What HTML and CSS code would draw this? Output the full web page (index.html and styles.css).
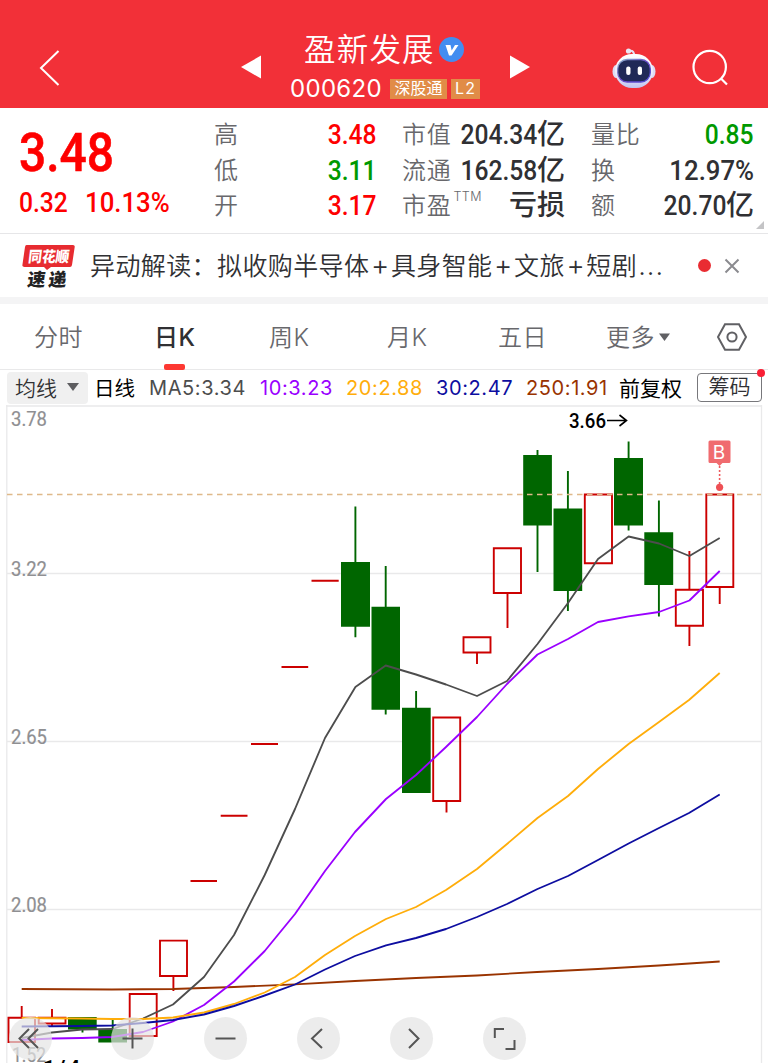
FILE: index.html
```html
<!DOCTYPE html>
<html lang="zh-CN">
<head>
<meta charset="utf-8">
<title>盈新发展 000620</title>
<link rel="stylesheet" href="styles.css">
</head>
<body>
<header class="top">
  <svg class="back" width="24" height="40" viewBox="0 0 24 40"><path d="M21.500 4 4 21 21.500 38"/></svg>
  <svg class="prev" width="20" height="24" viewBox="0 0 20 24"><path d="M0 12 20 .5V23.500z"/></svg>
  <div class="title">
    <div class="name"><span class="name-text">盈新发展</span><svg width="25" height="25" viewBox="0 0 25 25"><circle cx="12.500" cy="12.500" r="12.500" fill="#438df0"/><path d="M6.500 8h5l1.200 5.500L16 8h3.500L12.500 18.500H10z" fill="#fff"/></svg></div>
    <div class="code"><span class="code-text">000620</span><span class="tag tag-sgt">深股通</span><span class="tag tag-l2">L2</span></div>
  </div>
  <svg class="next" width="20" height="24" viewBox="0 0 20 24"><path d="M20 12 0 .5V23.500z"/></svg>
  <svg class="robot" width="44" height="41" viewBox="0 0 44 41">
    <defs>
      <linearGradient id="shell" x1="0" y1="0" x2="0" y2="1"><stop offset="0" stop-color="#fff"/><stop offset=".6" stop-color="#ece9fb"/><stop offset="1" stop-color="#bfc4ee"/></linearGradient>
      <linearGradient id="rim" x1="0" y1="0" x2="1" y2="1"><stop offset="0" stop-color="#8eb4cb"/><stop offset=".5" stop-color="#6b4bc8"/><stop offset="1" stop-color="#514bd4"/></linearGradient>
    </defs>
    <path d="M17 3q6-1 5 6" fill="none" stroke="#e6e0f2" stroke-width="2"/><circle cx="16.500" cy="3" r="2.600" fill="#e9e7f5"/>
    <ellipse cx="4" cy="23.500" rx="3.500" ry="6.500" fill="#dcdcf4"/><ellipse cx="40" cy="23.500" rx="3.500" ry="6.500" fill="#dcdcf4"/>
    <rect x="3" y="6" width="38" height="34" rx="17" fill="url(#shell)"/>
    <rect x="5.700" y="11.500" width="32.600" height="22.500" rx="9.500" fill="#202957" stroke="url(#rim)" stroke-width="1.300"/>
    <rect x="14.200" y="18.500" width="4.300" height="8.500" rx="2" fill="#fff"/><rect x="25.700" y="18.500" width="4.300" height="8.500" rx="2" fill="#fff"/>
  </svg>
  <svg class="search" width="36" height="38" viewBox="0 0 36 38"><circle cx="17.700" cy="18" r="16.200"/><path d="M29 29.500 35 35.500"/></svg>
</header>

<section class="quote">
  <div class="price">
    <div class="last"><span class="num">3.48</span></div>
    <div class="chg"><span class="num">0.32</span><span class="num pct">10.13%</span></div>
  </div>
  <dl class="stats s1">
    <dt>高</dt><dd class="up"><span class="num">3.48</span></dd>
    <dt>低</dt><dd class="down"><span class="num">3.11</span></dd>
    <dt>开</dt><dd class="up"><span class="num">3.17</span></dd>
  </dl>
  <dl class="stats s2">
    <dt>市值</dt><dd><span class="num">204.34</span>亿</dd>
    <dt>流通</dt><dd><span class="num">162.58</span>亿</dd>
    <dt>市盈<sup>TTM</sup></dt><dd>亏损</dd>
  </dl>
  <dl class="stats s3">
    <dt>量比</dt><dd class="down"><span class="num">0.85</span></dd>
    <dt>换</dt><dd><span class="num pct">12.97%</span></dd>
    <dt>额</dt><dd><span class="num">20.70</span>亿</dd>
  </dl>
  <i class="corner"></i>
</section>

<section class="news">
  <svg class="logo" width="54" height="46" viewBox="0 0 54 46">
    <path d="M4.500 0H51q2 0 1.700 2L50 20q-.4 2-2 2H29l-4 3-3-3H2.500Q0 22 .4 20L3 2q.3-2 1.500-2z" fill="#e72b30"/>
    <text x="5" y="17" textLength="41" lengthAdjust="spacingAndGlyphs" class="logo-a">同花顺</text>
    <text x="7" y="41" textLength="39" class="logo-b">速递</text>
  </svg>
  <p class="headline">异动解读：拟收购半导体<b>+</b>具身智能<b>+</b>文旅<b>+</b>短剧<b class="etc">...</b></p>
  <i class="dot"></i>
  <svg class="close" width="16" height="16" viewBox="0 0 16 16"><path d="M1.500 1.500 14.500 14.500M14.500 1.500 1.500 14.500"/></svg>
</section>

<nav class="tabs">
  <span class="tab">分时</span>
  <span class="tab active">日K</span>
  <span class="tab">周K</span>
  <span class="tab">月K</span>
  <span class="tab">五日</span>
  <span class="tab more">更多<svg width="11" height="9" viewBox="0 0 11 9"><path d="M0 .5h11L5.500 8z"/></svg></span>
  <svg class="gear" width="30" height="28" viewBox="0 0 30 28"><path d="M8 1.300h14L29 14l-7 12.700H8L1 14z"/><circle cx="15" cy="14" r="4.600"/></svg>
</nav>

<div class="ma">
  <span class="pick">均线<svg width="12" height="8" viewBox="0 0 12 8"><path d="M0 0h12L6 8z"/></svg></span>
  <span class="period">日线</span>
  <span class="v v5">MA5:3.34</span>
  <span class="v v10">10:3.23</span>
  <span class="v v20">20:2.88</span>
  <span class="v v30">30:2.47</span>
  <span class="v v250">250:1.91</span>
  <span class="adjust">前复权</span>
  <span class="chips">筹码<i></i></span>
</div>

<main class="chart">
  <svg class="plot" width="768" height="658" viewBox="0 405 768 658">
    <g class="grid"><path d="M6 406H762M7 573.500H761M7 741.500H761M7 909.500H761"/><path d="M6.800 405V1063M761.500 405V1063"/></g>
    <g class="axis">
      <text x="11" y="426" textLength="36" lengthAdjust="spacingAndGlyphs">3.78</text>
      <text x="11" y="576" textLength="36" lengthAdjust="spacingAndGlyphs">3.22</text>
      <text x="11" y="744" textLength="36" lengthAdjust="spacingAndGlyphs">2.65</text>
      <text x="11" y="912" textLength="36" lengthAdjust="spacingAndGlyphs">2.08</text>
      <text x="12" y="1062" textLength="34" lengthAdjust="spacingAndGlyphs">1.52</text>
    </g>
    <text class="date" x="43" y="1075" textLength="37">1/4</text>
    <g class="rise">
      <path d="M21.700 1006V1017M52 1009V1017M52 1024V1026M173.400 976V991M446.500 802V812.500M477 653V664M507.500 593V628M689.400 551V589M689.400 626V646M719.700 587V604"/>
      <path d="M190.500 881H217M220.700 815.800H247.500M251 744H278M281.500 667H308.200M311.500 580.700H338.700"/>
      <path d="M8.500 1017.800H35V1042H8.500zM38.700 1017.800H65.500V1023.500H38.700zM129.700 994H156.700V1036H129.700zM160 940.600H187V976H160zM433.200 717.500H460.200V801H433.200zM463.500 637.200H490.500V652.500H463.500zM493.800 548.200H521V593H493.800zM584.800 494.500H612V563.300H584.800zM675.800 589.700H703V625.700H675.800zM706.300 494.500H733.300V587H706.300z"/>
    </g>
    <g class="fall">
      <path class="wick" d="M82.500 1018V1032.500M112.700 1018V1040M355.400 506.500V637.200M385.700 566V714.500M416.100 691V793M537.500 450V572M567.900 471V611M628.600 441.500V530.500M658.900 500.500V616.500"/>
      <path d="M68 1017h28.700v12.500H68zM98.300 1029H127v13.500H98.300zM341 562h29v64.800h-29zM371.500 606.700H400V709.700H371.500zM402 707.700h28.700V793H402zM523.200 455h28.700v70.500H523.200zM553.500 508.500H582.200V591H553.500zM614 458h29v67.500H614zM644.300 532.300H673.200V585H644.300z"/>
    </g>
    <path class="current" d="M7 494.500H761"/>
    <g class="lines">
      <polyline stroke="#993300" points="21.700,989 112,989.500 173,989 234,987 295,984.300 355,981 416,978 477,975.500 537,972 598,969 659,965.500 719.700,961.500"/>
      <polyline stroke="#4d4d4d" points="21.700,1038 52,1032.500 82,1029.500 112.700,1029 143,1018.500 173,1004.500 204,977 234,935 264.700,875 295,809 325,738 355.400,687 385.700,665.500 416,674.500 446,684.500 477,696 507,681 537.500,644 568,603 598,559 628.600,536.500 659,543.500 689.400,556 719.700,538"/>
      <polyline stroke="#9a00ff" points="21.700,1040 52,1038.500 82,1038 112,1037 143,1032 173,1021.500 204,1005 234,981.500 264.700,951 295,914 325,871 355,832 386,799 416,775 446,747 477,717 507,684 537.500,654.500 568,639 598,622 628.600,616.300 659,612 689.400,600.500 719.700,571"/>
      <polyline stroke="#ffad0a" points="21.700,1018 82,1018.500 112,1019 143,1019 173,1017.500 204,1012.500 234,1004 264.700,992.500 295,977 325,955 355,936 386,919 416,907 446,890 477,869 507,844 537.500,818 568,796 598,769 628.600,744 659,722 689,700 719.700,673"/>
      <polyline stroke="#0d0da0" points="21.700,1026.500 82,1026 112,1025.500 143,1023 173,1020 204,1014.500 234,1006 264.700,995.500 295,984.500 325,969.500 355,956 386,945.300 416,938 446,929 477,917 507,904 537.500,889 568,876 598,860 628.600,843.500 659,828 689,813 719.700,794.500"/>
    </g>
    <g class="peak"><text x="569" y="428" textLength="37" lengthAdjust="spacingAndGlyphs">3.66</text><path d="M607 420.500H626M619.500 415 626.500 420.500 619.500 426"/></g>
    <g class="buy"><path d="M711 440.500h18q1.500 0 1.500 1.500v19.500q0 1.500-1.500 1.500h-6.500l-3 3-3-3H710q-1.500 0-1.500-1.500V442q0-1.500 1.500-1.500z"/><text x="712.800" y="459">B</text><path class="stem" d="M719.600 466V484"/><circle cx="719.600" cy="487.300" r="3.600"/></g>
  </svg>
  <div class="controls">
    <span><svg width="42" height="42"><path d="M20 12 10.500 21.500 20 31M29 12 19.500 21.500 29 31"/></svg></span>
    <span><svg width="42" height="42"><path d="M11.500 21.500h20M21.500 11.500v20"/></svg></span>
    <span><svg width="42" height="42"><path d="M11.500 21.500h20"/></svg></span>
    <span><svg width="42" height="42"><path d="M25 12 15 21.500 25 31"/></svg></span>
    <span><svg width="42" height="42"><path d="M19 12 28.500 21.500 19 31"/></svg></span>
    <span><svg width="42" height="42"><path d="M11.800 21V12H21M31.500 23v9H22.500"/></svg></span>
  </div>
</main>
</body>
</html>
```

FILE: styles.css
```css
* { box-sizing: border-box; }
body {
  margin: 0; width: 768px; height: 1063px; overflow: hidden; background: #fff; color: #303033;
  font-family: Inter, "Noto Sans CJK SC", sans-serif;
}
svg { display: block; flex: none; }
p, dl, dd { margin: 0; }

.top { height: 108px; background: #f23038; display: flex; align-items: flex-start; color: #fff; }
.back { margin: 47px 0 0 37px; fill: none; stroke: #fff; stroke-width: 2; }
.prev, .next { fill: #fff; margin-top: 55px; }
.prev { margin-left: 180px; }
.title { width: 190px; margin: 31px 0 0 29px; }
.name { display: flex; align-items: center; height: 37px; padding-left: 14px; }
.name-text { font-size: 31.5px; letter-spacing: 1.2px; font-weight: 350; line-height: 37px; }
.name svg { margin-left: 4px; }
.code { display: flex; align-items: center; height: 22px; margin-top: 9px; }
.code-text { font-size: 24px; letter-spacing: .3px; width: 100px; white-space: nowrap; flex: none; line-height: 22px; padding-top: 2px; }
.tag { background: #e18c47; height: 20px; line-height: 19px; font-size: 16px; text-align: center; flex: none; margin-top: 1px; }
.tag-sgt { width: 57px; }
.tag-l2 { width: 29px; margin-left: 4px; letter-spacing: 1px; }
.next { margin-left: 30px; }
.robot { margin: 48px 0 0 82px; }
.search { margin: 49px 0 0 36px; fill: none; stroke: #fff; stroke-width: 2.2; }

.quote { height: 126px; border-bottom: 1px solid #e6e6e8; display: flex; position: relative; }
.num { font-family: Roboto, sans-serif; font-weight: 500; display: inline-block; transform: scaleX(.88); transform-origin: right; }
.num.pct { transform: scaleX(.92); }
.price { width: 214px; flex: none; padding: 15px 0 0 19px; color: #fe0000; }
.price .num { transform-origin: left; }
.last { height: 57px; line-height: 57px; font-size: 54.5px; -webkit-text-stroke: .6px #fe0000; }
.chg { font-size: 28px; line-height: 46px; display: flex; }
.chg .num { width: 66px; }
.stats { flex: none; display: grid; grid-template-columns: 26px 1fr; grid-template-rows: repeat(3, 35.500px); padding-top: 9px; line-height: 35px; white-space: nowrap; }
.stats dt { font-size: 24px; letter-spacing: .7px; font-weight: 350; color: #68686c; }
.stats dd { font-size: 28px; font-weight: 500; text-align: right; line-height: 35px; }
.stats .num { font-size: 28px; }
.stats sup { font-size: 12.500px; letter-spacing: .5px; vertical-align: top; line-height: 18px; margin-left: 2px; }
.s1 { width: 163px; }
.s2 { width: 163px; margin-left: 25px; }
.s3 { width: 163px; margin-left: 26px; }
.stats .up { color: #fe0000; }
.stats .down { color: #009900; }
.corner { position: absolute; right: 4px; bottom: 4px; width: 8px; height: 8px; background: #c4c4c6; clip-path: polygon(100% 0, 100% 100%, 0 100%); }

.news { height: 70px; border-bottom: 7px solid #f4f4f5; display: flex; align-items: center; }
.logo { margin: 4px 0 0 22px; }
.logo text { font-family: "Noto Sans CJK SC", sans-serif; font-weight: 900; transform: skewX(-7deg); transform-origin: 27px 23px; }
.logo-a { font-size: 15px; fill: #fff; }
.logo-b { font-size: 18px; fill: #222; }
.headline { width: 590px; margin-left: 14px; font-size: 25px; letter-spacing: .4px; font-weight: 350; white-space: nowrap; line-height: 62px; }
.headline b { display: inline-block; width: 21.5px; text-align: center; font-weight: 300; font-size: 28px; line-height: 25px; letter-spacing: 0; }
.headline .etc { width: auto; font-size: 27px; letter-spacing: 1px; margin-left: 1px; }
.dot { width: 13px; height: 13px; border-radius: 50%; background: #e92c32; margin-left: 18px; }
.close { margin-left: 13px; stroke: #8b8b8f; stroke-width: 2; }

.tabs { height: 66px; border-bottom: 1px solid #e9e9ea; display: flex; align-items: center; color: #68686c; font-size: 24px; font-weight: 350; line-height: 66px; padding-left: 34px; }
.tab { position: relative; letter-spacing: .4px; top: 1px; }
.tab:nth-child(1) { width: 120px; }
.tab:nth-child(2) { width: 115px; }
.tab:nth-child(3) { width: 118px; }
.tab:nth-child(4) { width: 111px; }
.tab:nth-child(5) { width: 108px; }
.tab.active { color: #303033; font-weight: 500; }
.tab.active::after { content: ""; position: absolute; left: 10px; bottom: 1px; width: 21px; height: 6px; border-radius: 2px; background: #fd3832; }
.more { width: 111px; display: flex; align-items: center; }
.more svg { fill: #606064; margin-left: 4px; }
.gear { fill: none; stroke: #606064; stroke-width: 2; }

.ma { height: 35px; display: flex; align-items: center; font-size: 20px; white-space: nowrap; padding-left: 7px; }
.ma > span { flex: none; }
.pick { width: 81px; height: 32px; border-radius: 4px; background: #f0f0f0; display: flex; align-items: center; padding: 0 0 2px 8px; font-size: 21px; font-weight: 350; }
.pick svg { margin-left: 10px; fill: #5d5d60; }
.period { margin-left: 6px; width: 55px; color: #000; font-size: 20.5px; padding-bottom: 1px; }
.v { letter-spacing: .6px; padding-top: 1px; }
.v5 { width: 111px; color: #4d4d4d; }
.v10 { width: 86px; color: #9a00ff; }
.v20 { width: 90px; color: #ffad0a; }
.v30 { width: 90px; color: #0d0da0; }
.v250 { width: 93px; color: #993300; }
.adjust { width: 78px; font-size: 21px; color: #000; padding-bottom: 2px; }
.chips { width: 65px; height: 29px; border: 1px solid #77777b; border-radius: 4px; text-align: center; line-height: 26px; font-size: 21px; font-weight: 350; position: relative; }
.chips i { position: absolute; right: -4px; top: -5px; width: 8px; height: 8px; border-radius: 50%; background: #f91f35; }

.chart { position: relative; height: 658px; overflow: hidden; }
.plot text { font-family: Roboto, sans-serif; }
.grid path { fill: none; stroke: #e9e9ea; stroke-width: 1.300; }
.axis text { font-size: 20px; fill: #8f8f92; stroke: #8f8f92; stroke-width: .2; }
.plot .date { font-size: 21px; font-weight: 700; fill: #000; }
.rise path { fill: none; stroke: #cc0000; stroke-width: 1.900; }
.fall path { fill: #006600; }
.fall .wick { stroke: #006600; stroke-width: 1.900; fill: none; }
.current { stroke: #dfb989; stroke-width: 1.300; stroke-dasharray: 5.500 4.500; }
.lines polyline { fill: none; stroke-width: 1.850; stroke-linejoin: round; }
.peak text { font-size: 21px; font-weight: 500; fill: #000; }
.peak path { fill: none; stroke: #000; stroke-width: 1.600; }
.buy path { fill: #f06b6f; }
.buy text { font-size: 19px; fill: #fff; font-family: Inter, sans-serif; }
.buy .stem { stroke: #ee5a5e; stroke-width: 1.600; stroke-dasharray: 2 2; }
.buy circle { fill: #ee5055; }
.controls { position: absolute; left: 9px; bottom: 3px; display: flex; gap: 50px; }
.controls span { width: 43px; height: 43px; border-radius: 50%; background: rgba(228, 228, 228, .7); }
.controls span:first-child { margin-right: 9px; }
.controls path { fill: none; stroke: #555; stroke-width: 2; }
```
